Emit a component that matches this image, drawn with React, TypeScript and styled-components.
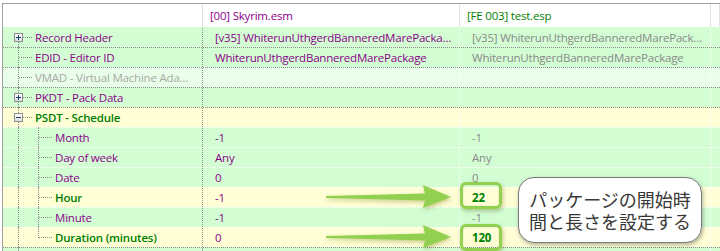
import styled, { createGlobalStyle, css } from "styled-components"

type Tone = "green" | "pale" | "yellow"
type Line = "full" | "top" | "bottom" | "none"

interface GuideDef {
  v: Line
  h?: boolean
  box?: "+" | "-"
}

interface RowData {
  label: string
  tone: Tone
  guides: GuideDef[]
  major?: boolean
  accent?: boolean
  muted?: boolean
  master?: string
  plugin?: string
  pluginWin?: boolean
}

const GlobalStyle = createGlobalStyle`
  html, body { margin: 0; padding: 0; background: #fff; }
  body {
    font-family: "Open Sans", "Noto Sans", sans-serif;
    font-size: 11.5px;
    letter-spacing: -0.2px;
  }
`

const bg: Record<Tone, string> = {
  green: "#d3fdd3",
  pale: "#e8fee8",
  yellow: "#fffed5",
}

const Frame = styled.div`
  position: relative;
  width: 720px;
  height: 251px;
  overflow: hidden;
  padding: 3px 0 0 2px;
  box-sizing: border-box;
`

const Table = styled.div`
  border-left: 1px solid #a0a0a0;
  border-top: 1px solid #a0a0a0;
`

const cols = css`
  display: grid;
  grid-template-columns: 200px 257px 251px 1fr;
`

const HeadRow = styled.div`
  ${cols};
  height: 23px;
  background: #fff;
`

const HeadCell = styled.div<{ $color?: string }>`
  border-right: 1px solid #e2e2e2;
  padding-left: 7px;
  line-height: 23px;
  color: ${(p) => p.$color || "#000"};
  white-space: nowrap;
`

const Row = styled.div<{ $tone: Tone; $major?: boolean }>`
  ${cols};
  height: 20px;
  box-sizing: border-box;
  background: ${(p) => bg[p.$tone]};
  border-top: 1px dotted ${(p) => (p.$major ? "#8c8c8c" : "#ffffff")};
  &:first-of-type {
    border-top-color: transparent;
  }
`

const TreeCell = styled.div`
  display: flex;
  align-items: stretch;
  padding-left: 6px;
  padding-right: 8px;
  border-right: 1px dotted #8c8c8c;
  min-width: 0;
`

const Guide = styled.span<{ $v: Line; $h?: boolean }>`
  position: relative;
  flex: 0 0 20px;
  &::before {
    content: "";
    position: absolute;
    left: 9px;
    top: ${(p) => (p.$v === "bottom" ? "9px" : "-1px")};
    bottom: ${(p) => (p.$v === "top" ? "9px" : "0")};
    border-left: 1px dotted #8c8c8c;
    display: ${(p) => (p.$v === "none" ? "none" : "block")};
  }
  &::after {
    content: "";
    position: absolute;
    left: 10px;
    width: 13px;
    top: 9px;
    border-top: 1px dotted #8c8c8c;
    display: ${(p) => (p.$h ? "block" : "none")};
  }
`

const Box = styled.span`
  position: absolute;
  z-index: 1;
  left: 5px;
  top: 5px;
  width: 9px;
  height: 9px;
  box-sizing: border-box;
  border: 1px solid #8f8f8f;
  background: linear-gradient(#ffffff, #dcdcdc);
  display: flex;
  align-items: center;
  justify-content: center;
  svg { display: block; }
`

const Label = styled.span<{ $accent?: boolean; $muted?: boolean }>`
  flex: 1;
  min-width: 0;
  padding-left: 6px;
  line-height: 19px;
  white-space: nowrap;
  overflow: hidden;
  text-overflow: ellipsis;
  color: ${(p) => (p.$muted ? "#a8a8a8" : p.$accent ? "#008000" : "#8b008b")};
  font-weight: ${(p) => (p.$accent ? 600 : 400)};
`

const Value = styled.div<{ $kind: "master" | "plugin" | "win" }>`
  padding: 0 6px 0 12px;
  line-height: 19px;
  white-space: nowrap;
  overflow: hidden;
  text-overflow: ellipsis;
  border-right: 1px dotted #ffffff;
  color: ${(p) => (p.$kind === "master" ? "#8b008b" : p.$kind === "win" ? "#008000" : "#8a8a8a")};
  font-weight: ${(p) => (p.$kind === "win" ? 700 : 400)};
`

const Filler = styled.div``

const Overlay = styled.svg`
  position: absolute;
  left: 0;
  top: 0;
  pointer-events: none;
`

const Mark = styled.div<{ $top: number }>`
  position: absolute;
  left: 460px;
  top: ${(p) => p.$top}px;
  width: 42px;
  height: 27px;
  box-sizing: border-box;
  border: 3.5px solid #92d050;
  border-radius: 6px;
  box-shadow: 1px 2px 4px rgba(90, 90, 0, 0.35), inset 0 0 2px rgba(90, 90, 0, 0.2);
`

const Callout = styled.div`
  position: absolute;
  left: 518px;
  top: 177px;
  width: 184px;
  height: 66px;
  box-sizing: border-box;
  background: #fff;
  border: 1px solid #7a7a7a;
  border-radius: 16px;
  box-shadow: 1px 2px 4px rgba(0, 0, 0, 0.3);
  display: flex;
  align-items: center;
  justify-content: center;
  text-align: center;
  font-family: "Noto Sans CJK JP", "Noto Sans", sans-serif;
  font-size: 18px;
  letter-spacing: 0;
  line-height: 22px;
  color: #383838;
`

const rows: RowData[] = [
  {
    label: "Record Header",
    tone: "green",
    major: true,
    guides: [{ v: "bottom", box: "+", h: true }],
    master: "[v35] WhiterunUthgerdBanneredMarePackage",
    plugin: "[v35] WhiterunUthgerdBanneredMarePackage",
  },
  {
    label: "EDID - Editor ID",
    tone: "green",
    major: true,
    guides: [{ v: "full", h: true }],
    master: "WhiterunUthgerdBanneredMarePackage",
    plugin: "WhiterunUthgerdBanneredMarePackage",
  },
  { label: "VMAD - Virtual Machine Adapter", tone: "pale", major: true, muted: true, guides: [{ v: "full", h: true }] },
  { label: "PKDT - Pack Data", tone: "green", major: true, guides: [{ v: "full", box: "+", h: true }] },
  { label: "PSDT - Schedule", tone: "yellow", major: true, accent: true, guides: [{ v: "full", box: "-", h: true }] },
  { label: "Month", tone: "green", guides: [{ v: "full" }, { v: "full", h: true }], master: "-1", plugin: "-1" },
  { label: "Day of week", tone: "green", guides: [{ v: "full" }, { v: "full", h: true }], master: "Any", plugin: "Any" },
  { label: "Date", tone: "green", guides: [{ v: "full" }, { v: "full", h: true }], master: "0", plugin: "0" },
  { label: "Hour", tone: "yellow", accent: true, guides: [{ v: "full" }, { v: "full", h: true }], master: "-1", plugin: "22", pluginWin: true },
  { label: "Minute", tone: "green", guides: [{ v: "full" }, { v: "full", h: true }], master: "-1", plugin: "-1" },
  { label: "Duration (minutes)", tone: "yellow", accent: true, guides: [{ v: "full" }, { v: "top", h: true }], master: "0", plugin: "120", pluginWin: true },
  // next record, only its top edge is in view
  { label: "", tone: "green", major: true, guides: [{ v: "full" }] },
]

function Toggle({ sign }: { sign: "+" | "-" }) {
  return (
    <Box>
      <svg width="7" height="7" viewBox="0 0 7 7">
        <path d="M1 3.5h5" stroke="#1d3f78" strokeWidth="1" />
        {sign === "+" && <path d="M3.5 1v5" stroke="#1d3f78" strokeWidth="1" />}
      </svg>
    </Box>
  )
}

function Arrow({ y }: { y: number }) {
  const pts = [
    [326, y - 1],
    [425, y - 3.5],
    [423, y - 12],
    [451, y],
    [423, y + 11],
    [425, y + 3.5],
    [326, y + 1],
  ]
  return <polygon points={pts.map((p) => p.join(",")).join(" ")} fill="#92d050" filter="url(#glow)" />
}

export default function App() {
  return (
    <>
      <GlobalStyle />
      <Frame>
        <Table>
          <HeadRow>
            <HeadCell />
            <HeadCell $color="#8b008b">[00] Skyrim.esm</HeadCell>
            <HeadCell $color="#008000">[FE 003] test.esp</HeadCell>
            <HeadCell />
          </HeadRow>
          <div>
            {rows.map((r, idx) => (
              <Row key={idx} $tone={r.tone} $major={r.major}>
                <TreeCell>
                  {r.guides.map((g, i) => (
                    <Guide key={i} $v={g.v} $h={g.h}>
                      {g.box && <Toggle sign={g.box} />}
                    </Guide>
                  ))}
                  <Label $accent={r.accent} $muted={r.muted}>
                    {r.label}
                  </Label>
                </TreeCell>
                <Value $kind="master">{r.master}</Value>
                <Value $kind={r.pluginWin ? "win" : "plugin"}>{r.plugin}</Value>
                <Filler />
              </Row>
            ))}
          </div>
        </Table>

        <Overlay width="720" height="251" viewBox="0 0 720 251">
          <defs>
            <filter id="glow" x="-10%" y="-60%" width="120%" height="220%">
              <feDropShadow dx="1" dy="2" stdDeviation="2" floodColor="#6e6a00" floodOpacity="0.35" />
            </filter>
          </defs>
          <Arrow y={197} />
          <Arrow y={237} />
        </Overlay>
        <Mark $top={182} />
        <Mark $top={224} />
        <Callout>
          パッケージの開始時
          <br />
          間と長さを設定する
        </Callout>
      </Frame>
    </>
  )
}
